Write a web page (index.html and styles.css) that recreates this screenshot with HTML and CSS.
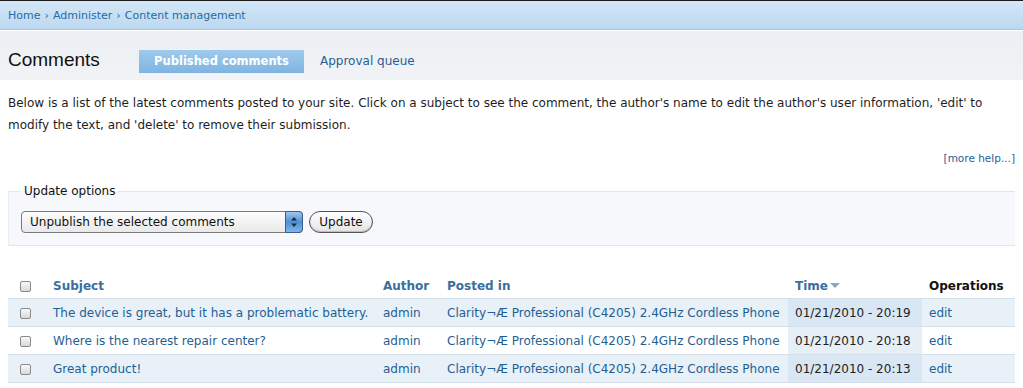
FILE: index.html
```html
<!DOCTYPE html>
<html lang="en">
<head>
  <meta charset="UTF-8" />
  <title>Comments</title>
  <link rel="stylesheet" href="styles.css">
</head>
<body>
  <!-- breadcrumb bar -->
  <div class="breadcrumb">
    <a href="#">Home</a> › <a href="#">Administer</a> › <a href="#">Content management</a>
  </div>

  <div class="page-head">
    <h1>Comments</h1>
    <a class="tab active" href="#">Published comments</a>
    <a class="tab" href="#">Approval queue</a>
  </div>

  <div class="content">
    <p class="intro">Below is a list of the latest comments posted to your site. Click on a subject to see the comment, the author's name to edit the author's user information, 'edit' to modify the text, and 'delete' to remove their submission.</p>
    <div class="more-help"><a href="#">[more help...]</a></div>

    <fieldset class="options">
      <legend>Update options</legend>
      <div class="options-row">
        <span class="select-wrap">
          <select>
            <option>Unpublish the selected comments</option>
            <option>Delete the selected comments</option>
          </select>
          <span class="select-arrows">
            <svg width="8" height="12" viewBox="0 0 8 12"><path d="M4 1 L7 4.5 H1 Z M4 11 L7 7.5 H1 Z" fill="#1d2b3a"/></svg>
          </span>
        </span>
        <button class="btn">Update</button>
      </div>
    </fieldset>

    <table class="comments">
      <colgroup>
        <col class="c-check"><col class="c-subject"><col class="c-author"><col class="c-posted"><col class="c-time"><col class="c-ops">
      </colgroup>
      <thead>
        <tr>
          <th class="check"><input type="checkbox"></th>
          <th><a href="#">Subject</a></th>
          <th><a href="#">Author</a></th>
          <th><a href="#">Posted in</a></th>
          <th class="sorted"><a href="#">Time<span class="arrow"></span></a></th>
          <th class="plain">Operations</th>
        </tr>
      </thead>
      <tbody>
        <tr class="odd">
          <td class="check"><input type="checkbox"></td>
          <td><a href="#">The device is great, but it has a problematic battery.</a></td>
          <td><a href="#">admin</a></td>
          <td><a href="#">Clarity¬Æ Professional (C4205) 2.4GHz Cordless Phone</a></td>
          <td class="active">01/21/2010 - 20:19</td>
          <td><a href="#">edit</a></td>
        </tr>
        <tr class="even">
          <td class="check"><input type="checkbox"></td>
          <td><a href="#">Where is the nearest repair center?</a></td>
          <td><a href="#">admin</a></td>
          <td><a href="#">Clarity¬Æ Professional (C4205) 2.4GHz Cordless Phone</a></td>
          <td class="active">01/21/2010 - 20:18</td>
          <td><a href="#">edit</a></td>
        </tr>
        <tr class="odd">
          <td class="check"><input type="checkbox"></td>
          <td><a href="#">Great product!</a></td>
          <td><a href="#">admin</a></td>
          <td><a href="#">Clarity¬Æ Professional (C4205) 2.4GHz Cordless Phone</a></td>
          <td class="active">01/21/2010 - 20:13</td>
          <td><a href="#">edit</a></td>
        </tr>
      </tbody>
    </table>
  </div>
</body>
</html>
```

FILE: styles.css
```css
body {
  margin: 0;
  font-family: "DejaVu Sans", Verdana, sans-serif;
  font-size: 12px;
  color: #1e1e1e;
  background: #fff;
}
a {
  color: #1f5f93;
  text-decoration: none;
}

/* breadcrumb */
.breadcrumb {
  height: 28px;
  padding: 0 8px;
  display: flex;
  align-items: center;
  gap: 4px;
  border-top: 1px solid #1a1a1a;
  border-bottom: 1px solid #a9c6df;
  background: linear-gradient(#d3e7f8, #bcd8f0);
  font-size: 11px;
  color: #2a6aa0;
}
.breadcrumb a {
  color: #2a6aa0;
}

/* title + tabs */
.page-head {
  height: 50px;
  box-sizing: border-box;
  padding: 9px 8px 0;
  display: flex;
  align-items: center;
  background: linear-gradient(#eceff3, #f1f3f6);
  border-top: 1px solid #fff;
}
.page-head h1 {
  margin: 0;
  width: 131px;
  font-family: "Liberation Sans", Arial, sans-serif;
  font-size: 19px;
  font-weight: normal;
  color: #111;
}
.tab {
  height: 23px;
  line-height: 23px;
  margin-top: 2px;
  padding: 0 16px;
  color: #1f5f93;
}
.tab.active {
  width: 165px;
  box-sizing: border-box;
  padding: 0;
  text-align: center;
  background: linear-gradient(#9ecaec, #7fb4e0);
  color: #fff;
  font-size: 11.5px;
  font-weight: bold;
}

.content {
  padding: 0 8px;
}
.intro {
  margin: 12px 0 0;
  line-height: 22px;
}
.more-help {
  margin-top: 12px;
  line-height: 20px;
  text-align: right;
  font-size: 10.5px;
  color: #333;
}
.more-help a {
  color: #1f5f93;
}

/* update options */
.options {
  margin: 16px 0 0;
  padding: 0 12px 12px;
  border: 1px solid #dfe6ed;
  border-left-color: #e8edf2;
  border-right: 0;
  background: #f6f8fb;
}
.options legend {
  padding: 0 3px;
  line-height: 14px;
  color: #111;
}
.options-row {
  margin-top: 13px;
  display: flex;
  gap: 6px;
}
.select-wrap {
  position: relative;
  display: inline-block;
}
.select-wrap select {
  appearance: none;
  width: 282px;
  height: 22px;
  padding: 0 0 0 8px;
  border: 1px solid #7a7a7a;
  border-radius: 4px;
  background: linear-gradient(#fdfdfd, #e9e9e9);
  font-family: inherit;
  font-size: 12px;
  color: #111;
}
.select-arrows {
  position: absolute;
  right: 0;
  top: 0;
  width: 18px;
  height: 22px;
  display: flex;
  align-items: center;
  justify-content: center;
  border: 1px solid #3a5c86;
  border-radius: 0 4px 4px 0;
  box-sizing: border-box;
  background: linear-gradient(#9fc6ef, #4f8fd6 50%, #7fb3ea);
}
.btn {
  height: 22px;
  width: 64px;
  padding: 0;
  border: 1px solid #555;
  border-radius: 11px;
  background: linear-gradient(#ffffff, #e4e4e4);
  box-shadow: inset 0 -1px 1px #bbb;
  font-family: inherit;
  font-size: 12px;
  color: #111;
}

/* comments table */
.comments {
  margin-top: 28px;
  width: 100%;
  border-collapse: collapse;
  table-layout: fixed;
}
.c-check { width: 38px; }
.c-subject { width: 330px; }
.c-author { width: 64px; }
.c-posted { width: 348px; }
.c-time { width: 134px; }
.c-ops { width: 93px; }

.comments th {
  height: 24px;
  padding: 0 7px;
  text-align: left;
  border-bottom: 1px solid #d5dfe9;
  white-space: nowrap;
}
.comments th a {
  color: #3a6e9c;
}
.comments th.plain {
  color: #111;
}
.comments td {
  height: 27px;
  padding: 0 7px;
  border-bottom: 1px solid #d5dfe9;
  white-space: nowrap;
  overflow: hidden;
}
.comments .check {
  padding-left: 12px;
}
.comments tr.odd td {
  background: #e8f0f8;
}
.comments tr.odd td.active {
  background: #d9e6f3;
}
.comments tr.even td.active {
  background: #e6eef6;
}
.comments td.active {
  color: #1e1e1e;
}
.arrow {
  display: inline-block;
  margin-left: 2px;
  width: 0;
  height: 0;
  border-left: 5px solid transparent;
  border-right: 5px solid transparent;
  border-top: 5px solid #8da7bf;
  vertical-align: 2px;
}
.comments input[type="checkbox"] {
  appearance: none;
  margin: 0;
  width: 11px;
  height: 11px;
  border: 1px solid #8a8a8a;
  border-radius: 2px;
  background: linear-gradient(#fafafa, #d8d8d8);
  vertical-align: middle;
}
```
